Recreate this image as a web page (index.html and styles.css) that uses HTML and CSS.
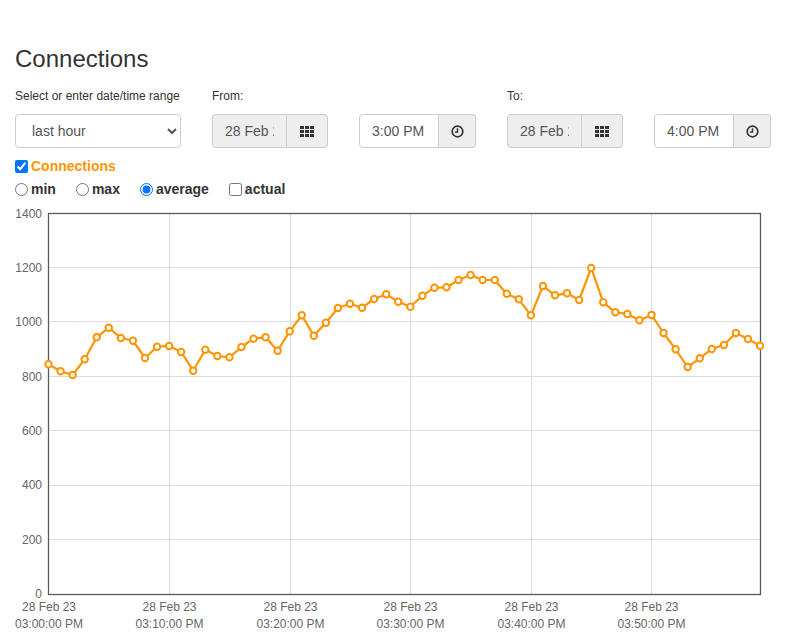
FILE: index.html
```html
<!DOCTYPE html>
<html lang="en">
<head>
<meta charset="utf-8">
<title>Connections</title>
<link rel="stylesheet" href="styles.css">
</head>
<body>
<div class="page">
  <h1 class="title">Connections</h1>
  <div class="filters">
    <div class="field">
      <label class="field-label">Select or enter date/time range</label>
      <select class="range-select"><option>last hour</option><option>last day</option><option>last week</option></select>
    </div>
    <div class="field">
      <label class="field-label">From:</label>
      <div class="ig ig-date">
        <input class="ig-input ig-readonly" type="text" value="28 Feb 2023" readonly>
        <span class="ig-btn">
          <svg class="icon-th" width="14" height="11" viewBox="0 0 14 11"><g fill="#333"><rect x="0" y="0" width="4" height="3"/><rect x="5" y="0" width="4" height="3"/><rect x="10" y="0" width="4" height="3"/><rect x="0" y="4" width="4" height="3"/><rect x="5" y="4" width="4" height="3"/><rect x="10" y="4" width="4" height="3"/><rect x="0" y="8" width="4" height="3"/><rect x="5" y="8" width="4" height="3"/><rect x="10" y="8" width="4" height="3"/></g></svg>
        </span>
      </div>
    </div>
    <div class="field">
      <label class="field-label">&nbsp;</label>
      <div class="ig ig-time">
        <input class="ig-input" type="text" value="3:00 PM">
        <span class="ig-btn">
          <svg width="13" height="13" viewBox="0 0 13 13"><circle cx="6.5" cy="6.5" r="5.3" fill="none" stroke="#333" stroke-width="1.7"/><path d="M6.5 3.2V7H4" fill="none" stroke="#333" stroke-width="1.5"/></svg>
        </span>
      </div>
    </div>
    <div class="field">
      <label class="field-label">To:</label>
      <div class="ig ig-date">
        <input class="ig-input ig-readonly" type="text" value="28 Feb 2023" readonly>
        <span class="ig-btn">
          <svg class="icon-th" width="14" height="11" viewBox="0 0 14 11"><g fill="#333"><rect x="0" y="0" width="4" height="3"/><rect x="5" y="0" width="4" height="3"/><rect x="10" y="0" width="4" height="3"/><rect x="0" y="4" width="4" height="3"/><rect x="5" y="4" width="4" height="3"/><rect x="10" y="4" width="4" height="3"/><rect x="0" y="8" width="4" height="3"/><rect x="5" y="8" width="4" height="3"/><rect x="10" y="8" width="4" height="3"/></g></svg>
        </span>
      </div>
    </div>
    <div class="field">
      <label class="field-label">&nbsp;</label>
      <div class="ig ig-time">
        <input class="ig-input" type="text" value="4:00 PM">
        <span class="ig-btn">
          <svg width="13" height="13" viewBox="0 0 13 13"><circle cx="6.5" cy="6.5" r="5.3" fill="none" stroke="#333" stroke-width="1.7"/><path d="M6.5 3.2V7H4" fill="none" stroke="#333" stroke-width="1.5"/></svg>
        </span>
      </div>
    </div>
  </div>
  <div class="series">
    <label class="opt"><input type="checkbox" checked><span class="series-name">Connections</span></label>
  </div>
  <div class="modes">
    <label class="opt"><input type="radio" name="mode">min</label>
    <label class="opt"><input type="radio" name="mode">max</label>
    <label class="opt"><input type="radio" name="mode" checked>average</label>
    <label class="opt"><input type="checkbox">actual</label>
  </div>
</div>
<svg class="chart" width="787" height="428" viewBox="0 205 787 428">
  <defs>
    <marker id="dot" markerWidth="10" markerHeight="10" refX="5" refY="5" markerUnits="userSpaceOnUse">
      <circle cx="5" cy="5" r="3.2" fill="#fff" stroke="#ff9400" stroke-width="2"/>
    </marker>
  </defs>
  <g stroke="#dcdcdc" stroke-width="1">
    <line x1="48" y1="267.5" x2="760" y2="267.5"/>
    <line x1="48" y1="321.5" x2="760" y2="321.5"/>
    <line x1="48" y1="376.5" x2="760" y2="376.5"/>
    <line x1="48" y1="430.5" x2="760" y2="430.5"/>
    <line x1="48" y1="485.5" x2="760" y2="485.5"/>
    <line x1="48" y1="539.5" x2="760" y2="539.5"/>
    <line x1="169.5" y1="213" x2="169.5" y2="594"/>
    <line x1="290.5" y1="213" x2="290.5" y2="594"/>
    <line x1="410.5" y1="213" x2="410.5" y2="594"/>
    <line x1="531.5" y1="213" x2="531.5" y2="594"/>
    <line x1="651.5" y1="213" x2="651.5" y2="594"/>
  </g>
  <rect x="48.5" y="213.5" width="712" height="381" fill="none" stroke="#5a5a5a" stroke-width="1.3"/>
  <g class="ylab" font-size="12" fill="#666" text-anchor="end">
    <text x="42" y="217.5">1400</text>
    <text x="42" y="271.8">1200</text>
    <text x="42" y="326.2">1000</text>
    <text x="42" y="380.6">800</text>
    <text x="42" y="435">600</text>
    <text x="42" y="489.4">400</text>
    <text x="42" y="543.9">200</text>
    <text x="42" y="598.3">0</text>
  </g>
  <g class="xlab" font-size="12" fill="#666" text-anchor="middle">
    <text x="49" y="611">28 Feb 23</text><text x="49" y="628">03:00:00 PM</text>
    <text x="169.5" y="611">28 Feb 23</text><text x="169.5" y="628">03:10:00 PM</text>
    <text x="290.5" y="611">28 Feb 23</text><text x="290.5" y="628">03:20:00 PM</text>
    <text x="410.5" y="611">28 Feb 23</text><text x="410.5" y="628">03:30:00 PM</text>
    <text x="531.5" y="611">28 Feb 23</text><text x="531.5" y="628">03:40:00 PM</text>
    <text x="651.5" y="611">28 Feb 23</text><text x="651.5" y="628">03:50:00 PM</text>
  </g>
  <polyline fill="none" stroke="#ff9400" stroke-width="2.2" stroke-linejoin="round"
    marker-start="url(#dot)" marker-mid="url(#dot)" marker-end="url(#dot)"
    points="48.5,364.3 60.56,371.3 72.62,375 84.68,359.3 96.74,337.3 108.8,327.7 120.86,338 132.92,340.7 144.98,358 157.04,346.7 169.1,346 181.16,352 193.22,370.7 205.28,349.7 217.34,356 229.4,357.3 241.46,347 253.52,338.7 265.58,337.3 277.64,350.7 289.7,331.3 301.76,315.3 313.82,335.7 325.88,322.7 337.94,308 350,303.7 362.06,307.7 374.12,299 386.18,294.3 398.24,301.7 410.3,306.7 422.36,295.7 434.42,287.7 446.48,287.3 458.54,280 470.6,275 482.66,280 494.72,280 506.78,293.7 518.84,299.3 530.9,315.3 542.96,286 555.02,295.3 567.08,293.3 579.14,300 591.2,268 603.26,302.3 615.32,312.3 627.38,314 639.44,320.3 651.5,315 663.56,333 675.62,349.3 687.68,367 699.74,358.3 711.8,349 723.86,345 735.92,333 747.98,339 760.04,345.7"/>
</svg>
</body>
</html>
```

FILE: styles.css
```css
html, body {
  margin: 0;
  padding: 0;
  background: #fff;
}

body {
  font-family: "Liberation Sans", Arial, Helvetica, sans-serif;
  color: #333;
  font-size: 14px;
  overflow: hidden;
}

.page {
  padding: 0 16px 0 15px;
}

.title {
  margin: 0;
  padding-top: 44px;
  font-size: 24px;
  font-weight: 400;
  line-height: 30px;
  color: #333;
}

.filters {
  display: grid;
  grid-template-columns: 166px 116px 117px 116px 117px;
  column-gap: 31px;
  margin-top: 14px;
}

.field-label {
  display: block;
  font-size: 12px;
  line-height: 17px;
  height: 17px;
  margin-bottom: 9px;
  color: #333;
  white-space: nowrap;
}

.range-select {
  display: block;
  box-sizing: border-box;
  width: 166px;
  height: 34px;
  margin: 0;
  padding: 6px 8px 6px 12px;
  font-family: inherit;
  font-size: 14px;
  color: #555;
  background-color: #fff;
  border: 1px solid #ccc;
  border-radius: 4px;
}

.ig {
  display: flex;
  height: 34px;
}

.ig-input {
  box-sizing: border-box;
  height: 34px;
  margin: 0;
  padding: 6px 12px;
  font-family: inherit;
  font-size: 14px;
  color: #555;
  background: #fff;
  border: 1px solid #ccc;
  border-radius: 4px 0 0 4px;
  outline: none;
  min-width: 0;
}

.ig-readonly {
  background: #eee;
}

.ig-date .ig-input {
  width: 75px;
}

.ig-time .ig-input {
  width: 80px;
}

.ig-btn {
  box-sizing: border-box;
  display: flex;
  align-items: center;
  justify-content: center;
  height: 34px;
  background: #eee;
  border: 1px solid #ccc;
  border-left: 0;
  border-radius: 0 4px 4px 0;
}

.ig-date .ig-btn {
  width: 41px;
}

.ig-time .ig-btn {
  width: 37px;
}

.series {
  margin-top: 8px;
  line-height: 20px;
  height: 20px;
  font-weight: bold;
  font-size: 14px;
}

.series-name {
  color: #ff9400;
}

.modes {
  display: flex;
  gap: 20px;
  margin-top: 3px;
  line-height: 20px;
  height: 20px;
  font-weight: bold;
  font-size: 14px;
  color: #333;
}

.opt {
  display: inline-flex;
  align-items: center;
}

.opt input {
  margin: 0 3px 0 0;
  width: 13px;
  height: 13px;
}

.chart {
  display: block;
  margin-top: 6px;
  font-family: "Liberation Sans", Arial, Helvetica, sans-serif;
}
```
